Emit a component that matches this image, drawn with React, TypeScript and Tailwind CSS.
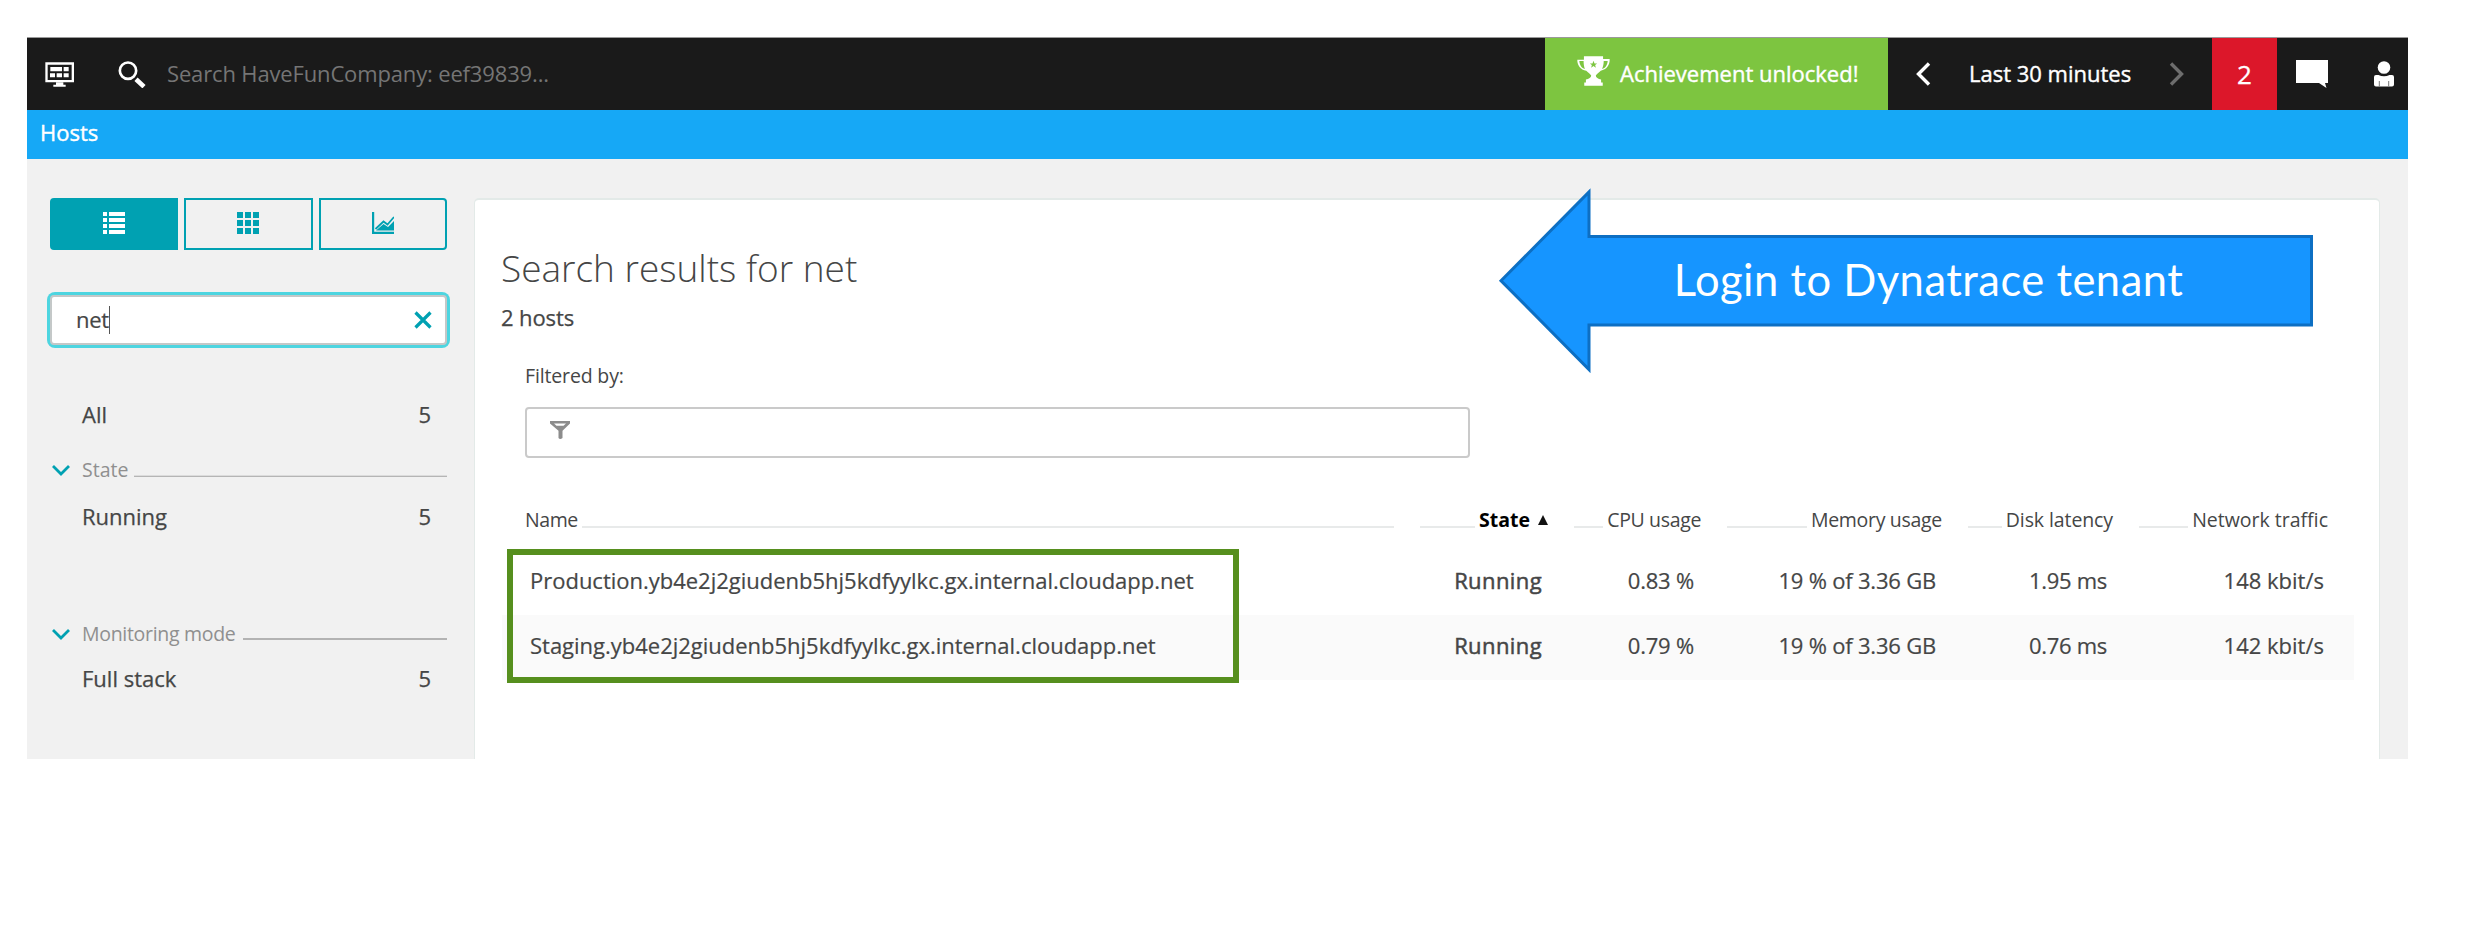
import type { ReactNode } from "react";

function MonitorIcon() {
  return (
    <svg viewBox="0 0 90 75" className="h-[25px] w-[30px]" fill="#fff">
      <path fillRule="evenodd" d="M1 1h86v60H1zM8 8v46h72V8z" />
      <path d="M16 15h35v13H16zM56 15h15v13H56zM15 34h15v12H15zM35 34h16v12H35zM56 34h15v12H56z" />
      <path d="M33 61h22v7h7v6H25v-6h8z" />
    </svg>
  );
}

function SearchIcon() {
  return (
    <svg viewBox="0 0 84 81" className="h-[27px] w-7" fill="none" stroke="#fff">
      <circle cx="30" cy="29" r="24.5" strokeWidth="8" />
      <path d="M54 55l24 22" strokeWidth="14" />
    </svg>
  );
}

function TrophyIcon() {
  return (
    <svg viewBox="0 0 100 90" className="h-[30px] w-[33px]" fill="#fff">
      <path
        fillRule="evenodd"
        d="M21 0h58v9h20c1 18-10 33-27 35-5 5-13 11-15 15 0 6 7 11 16 12v9h5v10H22V80h5v-9c9-1 16-6 16-12-2-4-10-10-15-15C11 42 0 27 1 11h20zM7 15c1 12 7 22 17 24-3-7-4-15-4-24zM93 15H81c0 9-2 17-5 24 10-2 16-12 17-24zM50 14l-3 8h-8l6 5-2 8 7-5 7 5-2-8 6-5h-8z"
      />
    </svg>
  );
}

function Chevron({ d, color }: { d: string; color: string }) {
  return (
    <svg viewBox="0 0 15 24" className="h-6 w-[15px]" fill="none" stroke={color} strokeWidth="3.4">
      <path d={d} />
    </svg>
  );
}

function ChatIcon() {
  return (
    <svg viewBox="0 0 32 28" className="h-7 w-8" fill="#fff">
      <path d="M0 0h32v23h-3l1.500 5L23 23H0z" />
    </svg>
  );
}

function PersonIcon() {
  return (
    <svg viewBox="0 0 20 26" className="h-[26px] w-5">
      <circle cx="10" cy="6.500" r="6.300" fill="#fff" />
      <path d="M2 14h2.500c3.500 1.600 7.500 1.600 11 0H18q2 0 2 2v7.500q0 2-2 2H2q-2 0-2-2V16q0-2 2-2z" fill="#fff" />
      <path d="M5.300 20v5.500M14.700 20v5.500" stroke="#777" strokeWidth="1" />
    </svg>
  );
}

function ListIcon() {
  return (
    <svg viewBox="0 0 22 22" className="size-[22px]" fill="#fff">
      <path d="M0 0h4v4H0zM6 0h16v4H6zM0 6h4v4H0zM6 6h16v4H6zM0 12h4v4H0zM6 12h16v4H6zM0 18h4v4H0zM6 18h16v4H6z" />
    </svg>
  );
}

function GridIcon() {
  return (
    <svg viewBox="0 0 22 22" className="size-[22px]" fill="#00a1b2">
      <path d="M0 0h6v6H0zM8 0h6v6H8zM16 0h6v6h-6zM0 8h6v6H0zM8 8h6v6H8zM16 8h6v6h-6zM0 16h6v6H0zM8 16h6v6H8zM16 16h6v6h-6z" />
    </svg>
  );
}

function ChartIcon() {
  return (
    <svg viewBox="0 0 22 22" className="size-[22px]">
      <path d="M1.100 0v20.900H22" fill="none" stroke="#00a1b2" strokeWidth="2.200" />
      <path d="M3.500 17l8-7.500 4 3L22 5" fill="none" stroke="#00a1b2" strokeWidth="1.800" />
      <path d="M4 18.500l7.500-6.500 4.500 3L22 9v9.500z" fill="#00a1b2" />
    </svg>
  );
}

function Tab({ className, children }: { className: string; children: ReactNode }) {
  return (
    <button className={`flex h-[52px] flex-1 items-center justify-center border-2 border-[#00a1b2] pb-[3px] ${className}`}>
      {children}
    </button>
  );
}

function FilterGroup({ title, className, lineClass, titleClass }: { title: string; className: string; lineClass: string; titleClass: string }) {
  return (
    <div className={`flex h-7 items-center pr-[3px] text-[19.5px] leading-7 text-[#8f8f8f] ${className}`}>
      <svg viewBox="0 0 18 11" className="ml-[5px] h-[11px] w-[18px]" fill="none" stroke="#00a1b2" strokeWidth="2.800">
        <path d="M1 1l8 8 8-8" />
      </svg>
      <span className={`ml-3 whitespace-nowrap ${titleClass}`}>{title}</span>
      <div className={`flex-1 self-end ${lineClass}`} />
    </div>
  );
}

function FilterRow({ label, className }: { label: string; className: string }) {
  return (
    <div className={`flex h-8 justify-between pr-[19px] pl-[35px] text-[22px] leading-8 text-[#454646] [-webkit-text-stroke:0.25px] ${className}`}>
      <span>{label}</span>
      <span>5</span>
    </div>
  );
}

function HeadCell({ children, className = "" }: { children: ReactNode; className?: string }) {
  return (
    <div className="flex">
      <div className="mr-1 mb-1.5 h-0.5 flex-1 self-end bg-[#e8eaea]" />
      <span className={`whitespace-nowrap ${className}`}>{children}</span>
    </div>
  );
}

const hosts = [
  { name: "Production.yb4e2j2giudenb5hj5kdfyylkc.gx.internal.cloudapp.net", cpu: "0.83 %", memory: "19 % of 3.36 GB", disk: "1.95 ms", traffic: "148 kbit/s" },
  { name: "Staging.yb4e2j2giudenb5hj5kdfyylkc.gx.internal.cloudapp.net", cpu: "0.79 %", memory: "19 % of 3.36 GB", disk: "0.76 ms", traffic: "142 kbit/s" },
];

const columns = "grid grid-cols-[870px_128px_127px_215px_145px_189px] gap-x-[26px] pl-[22px]";

function TopBar() {
  return (
    <header className="flex h-[73px] items-stretch border-t border-[#9a9a9a] bg-[#1a1a1a] text-[22px] text-white">
      <div className="flex items-center pl-[18px]">
        <MonitorIcon />
      </div>
      <div className="flex flex-1 items-center pl-[43px]">
        <SearchIcon />
        <span className="ml-[21px] pb-0.5 tracking-[-0.15px] text-[#757575]">Search HaveFunCompany: eef39839...</span>
      </div>
      <div className="flex w-[343px] items-center bg-[#7dc540] pl-8">
        <div className="pb-1.5">
          <TrophyIcon />
        </div>
        <span className="ml-[10px] pb-0.5 [-webkit-text-stroke:0.4px]">Achievement unlocked!</span>
      </div>
      <div className="flex w-[324px] items-center pl-7">
        <Chevron d="M13 1.500L2.500 12 13 22.500" color="#fff" />
        <span className="ml-[38px] w-[200px] pb-0.5 [-webkit-text-stroke:0.4px]">Last 30 minutes</span>
        <Chevron d="M2 1.500L12.500 12 2 22.500" color="#6d6d6d" />
      </div>
      <div className="flex w-[65px] items-center justify-center bg-[#dc172a] pt-px text-[26px] [-webkit-text-stroke:0.3px]">2</div>
      <div className="flex w-[131px] items-center pl-[19px]">
        <ChatIcon />
        <div className="ml-[46px]">
          <PersonIcon />
        </div>
      </div>
    </header>
  );
}

function Sidebar() {
  return (
    <aside className="w-[447px] pt-[39px] pr-6 pl-5">
      <div className="flex gap-1.5 px-[3px]">
        <Tab className="rounded-l-[4px] bg-[#00a1b2]"><ListIcon /></Tab>
        <Tab className=""><GridIcon /></Tab>
        <Tab className="rounded-r-[4px]"><ChartIcon /></Tab>
      </div>
      <div className="mt-[42px] h-14 rounded-[8px] bg-[#4dd5e0] p-[3px]">
        <div className="flex h-full items-center rounded-[4px] border-2 border-[#c4c8c8] bg-white pr-[13px] pl-6 text-[22px] text-[#454646]">
          <span className="pb-0.5 tracking-[-0.3px] [-webkit-text-stroke:0.2px]">net</span>
          <span className="h-[28px] w-px bg-[#555]" />
          <svg viewBox="0 0 18 18" className="ml-auto size-[18px]" fill="none" stroke="#00a1b2" strokeWidth="3.200">
            <path d="M1.500 1.500l15 15M16.500 1.500l-15 15" />
          </svg>
        </div>
      </div>
      <FilterRow label="All" className="mt-[50px]" />
      <FilterGroup title="State" className="mt-[26px]" titleClass="" lineClass="mb-[7px] ml-1.5 h-0.5 border-t border-[#dcdcdc] bg-[#b5b5b5]" />
      <FilterRow label="Running" className="mt-4" />
      <FilterGroup title="Monitoring mode" className="mt-[88px]" titleClass="tracking-[-0.3px]" lineClass="mb-2 ml-[7px] h-0.5 bg-[#b3b3b3]" />
      <FilterRow label="Full stack" className="mt-[14px]" />
    </aside>
  );
}

function Results() {
  return (
    <main className="mt-[39px] h-[700px] w-[1906px] rounded-[5px] border border-t-2 border-[#e3eae8] bg-white pt-[45px] pr-[25px] pl-[27px] text-[22px] text-[#454646]">
      <h1 className="-ml-px text-[37px] leading-[45px] font-light">Search results for net</h1>
      <p className="mt-[11px] -ml-px leading-8 tracking-[-0.1px] [-webkit-text-stroke:0.25px]">2 hosts</p>
      <p className="mt-[29px] ml-[23px] text-[19.5px] leading-7 tracking-[-0.15px]">Filtered by:</p>
      <div className="mt-[17px] ml-[23px] h-[51px] w-[945px] rounded-[4px] border-2 border-[#cacaca] pt-[12px] pl-[23px]">
        <svg viewBox="0 0 20 18" className="h-[18px] w-5">
          <path fillRule="evenodd" fill="#8c8c8c" d="M0 0h20v2.500l-7.500 7.300V17q-2.500 2-4 0V9.800L0 2.500zM4 2.500l2.500 2.200h7L16 2.500z" />
        </svg>
      </div>
      <div className={`${columns} mt-12 h-7 text-[19.5px] leading-7`}>
        <div className="flex">
          <span className="pl-px tracking-[-0.4px]">Name</span>
          <div className="mb-1.5 ml-1 h-0.5 flex-1 self-end bg-[#e8eaea]" />
        </div>
        <HeadCell className="flex items-center font-bold text-black">
          State
          <svg viewBox="0 0 10 10" className="ml-2 h-[10px] w-[10px]" fill="#111">
            <path d="M5 0l5 10H0z" />
          </svg>
        </HeadCell>
        <HeadCell className="tracking-[-0.35px]">CPU usage</HeadCell>
        <HeadCell className="tracking-[-0.3px]">Memory usage</HeadCell>
        <HeadCell className="tracking-[-0.1px]">Disk latency</HeadCell>
        <HeadCell>Network traffic</HeadCell>
      </div>
      <div className="mt-4 whitespace-nowrap [-webkit-text-stroke:0.2px]">
        {hosts.map((h) => (
          <div key={h.name} className={`${columns} h-[65px] text-right leading-[60px] even:bg-[#fafafa]`}>
            <span className="pl-1.5 text-left tracking-[-0.01px]">{h.name}</span>
            <span className="pr-1.5 tracking-[0.4px] [-webkit-text-stroke:0.5px]">Running</span>
            <span className="pr-[7px] tracking-[-0.2px]">{h.cpu}</span>
            <span className="pr-1.5 tracking-[-0.2px]">{h.memory}</span>
            <span className="pr-1.5 tracking-[-0.3px]">{h.disk}</span>
            <span className="pr-1">{h.traffic}</span>
          </div>
        ))}
      </div>
    </main>
  );
}

export default function App() {
  return (
    <div className="h-[948px] w-[2485px] overflow-hidden bg-white pt-[37px] pl-[27px] font-['Open_Sans',sans-serif]">
      <div className="relative h-[722px] w-[2381px] overflow-hidden bg-[#f1f1f1]">
        <TopBar />
        <div className="h-[49px] bg-[#16a8f6] pl-[13px] text-[22px] leading-[45px] text-white [-webkit-text-stroke:0.4px]">Hosts</div>
        <div className="flex">
          <Sidebar />
          <Results />
        </div>
        <div className="absolute top-[512px] left-[480px] h-[134px] w-[732px] border-6 border-[#568f1e]" />
        <div className="absolute top-[148px] left-[1468px] h-[190px] w-[824px]">
          <svg viewBox="0 0 824 190" className="absolute inset-0 h-[190px] w-[824px]">
            <path d="M6 95.700L94 7v44.500h722.500V140H94v44.500z" fill="#1695ff" stroke="#0d6fc3" strokeWidth="3" />
          </svg>
          <div className="relative flex h-full items-center justify-center pl-[43px] font-['Lato',sans-serif] text-[43.5px] tracking-[0.5px] whitespace-nowrap text-white">
            Login to Dynatrace tenant
          </div>
        </div>
      </div>
    </div>
  );
}
